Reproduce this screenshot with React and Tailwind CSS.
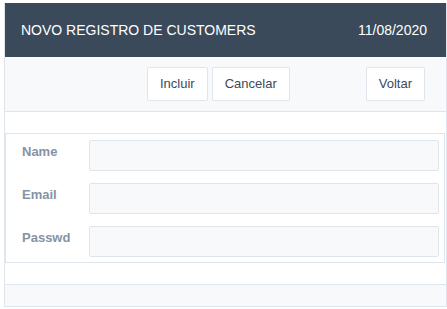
export default function App() {
  const fields = ["Name", "Email", "Passwd"];
  return (
    <div className="w-[447px] h-[309px] bg-white pt-[3px] pl-[4px]" style={{ fontFamily: '"Liberation Sans", Arial, sans-serif' }}>
      <div className="border-x border-b border-[#dfe5ec] w-[443px]">
        <div className="h-[54px] bg-[#3a4a5a] flex items-center justify-between pl-[16px] pr-[19px] text-white text-[14px]">
          <span>NOVO REGISTRO DE CUSTOMERS</span>
          <span>11/08/2020</span>
        </div>
        <div className="h-[55px] bg-[#f7f9fb] border-b border-[#dfe5ec] flex items-center pl-[142px] pr-[21px]">
          <button className="h-[34px] px-[12px] bg-white border border-[#dfe5ec] rounded-[2px] text-[13px] text-[#3d4a57]">Incluir</button>
          <button className="h-[34px] px-[12px] ml-[4px] bg-white border border-[#dfe5ec] rounded-[2px] text-[13px] text-[#3d4a57]">Cancelar</button>
          <button className="h-[34px] px-[12px] ml-auto bg-white border border-[#dfe5ec] rounded-[2px] text-[13px] text-[#3d4a57]">Voltar</button>
        </div>
        <div className="pt-[21px] pb-[21px] pr-[1px]">
          <div className="border border-[#dfe5ec] pt-[6px] pb-[5px] pl-[16px] pr-[5px] flex flex-col gap-[12px]">
            {fields.map((f) => (
              <div key={f} className="flex">
                <div className="w-[67px] pt-[2px] leading-[20px] text-[13px] font-bold text-[#8593a6]">{f}</div>
                <div className="flex-1 h-[31px] bg-[#f7f9fb] border border-[#dfe5ec] rounded-[2px]" />
              </div>
            ))}
          </div>
        </div>
        <div className="h-[22px] bg-[#f7f9fb] border-t border-[#dfe5ec]" />
      </div>
    </div>
  );
}
